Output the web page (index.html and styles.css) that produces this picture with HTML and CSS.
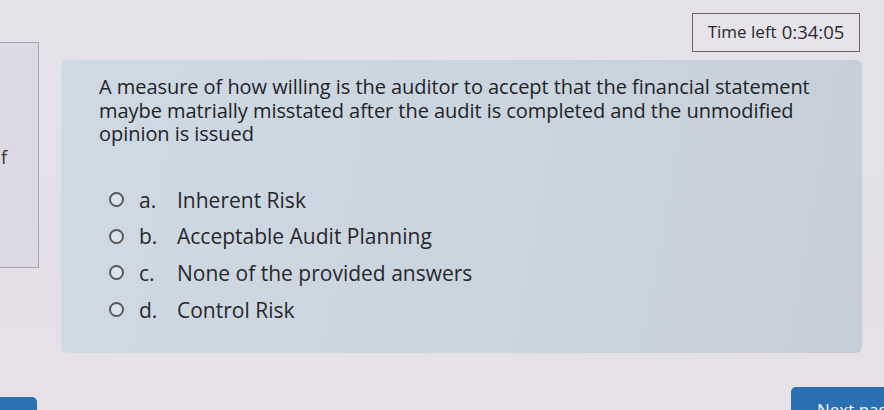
FILE: index.html
```html
<!DOCTYPE html>
<html>
<head>
<meta charset="utf-8">
<link rel="stylesheet" href="styles.css">
</head>
<body>
<div class="layout">
  <aside class="sidebar"><span class="side-f">f</span></aside>
  <main class="main">
    <div class="timer-row">
      <div class="timer">Time left <span class="clock">0:34:05</span></div>
    </div>
    <section class="card">
      <p class="question">A measure of how willing is the auditor to accept that the financial statement maybe matrially misstated after the audit is completed and the unmodified opinion is issued</p>
      <div class="answers">
        <label class="answer"><span class="radio"></span><span class="letter">a.</span><span class="atext">Inherent Risk</span></label>
        <label class="answer"><span class="radio"></span><span class="letter">b.</span><span class="atext">Acceptable Audit Planning</span></label>
        <label class="answer"><span class="radio"></span><span class="letter">c.</span><span class="atext">None of the provided answers</span></label>
        <label class="answer"><span class="radio"></span><span class="letter">d.</span><span class="atext">Control Risk</span></label>
      </div>
    </section>
  </main>
</div>
<footer class="footer">
  <div class="prev-btn"></div>
  <div class="next-btn">Next page</div>
</footer>
</body>
</html>
```
FILE: styles.css
```css
html, body {
  margin: 0;
  padding: 0;
}
body {
  width: 884px;
  height: 410px;
  overflow: hidden;
  background: linear-gradient(180deg, #e6e2ea 0%, #e4e0e8 60%, #e7e1e7 100%);
  font-family: "Open Sans", "Liberation Sans", sans-serif;
  color: #262628;
}
.layout {
  display: flex;
  align-items: flex-start;
  height: 384px;
}
.sidebar {
  width: 40px;
  height: 226px;
  margin-top: 42px;
  margin-left: -1px;
  border: 1px solid #aaa6ae;
  border-left: none;
  background: #ddd9e2;
  position: relative;
  box-sizing: border-box;
}
.side-f {
  position: absolute;
  left: 2px;
  top: 102px;
  font-size: 18px;
  color: #333;
}
.main {
  flex: 1;
  margin-left: 22px;
  margin-right: 22px;
  padding-top: 13px;
}
.timer-row {
  display: flex;
  justify-content: flex-end;
  padding-right: 2px;
}
.timer {
  width: 168px;
  height: 39px;
  box-sizing: border-box;
  border: 1.5px solid #6f6466;
  display: flex;
  align-items: center;
  justify-content: center;
  font-size: 17px;
  font-weight: 500;
  color: #2a2a2c;
  background: #e7e3ea;
  padding-bottom: 2px;
}
.clock {
  margin-left: 5px;
  font-size: 18.5px;
}
.card {
  margin-top: 8px;
  height: 293px;
  box-sizing: border-box;
  background: linear-gradient(100deg, #d0dae4 0%, #cad4df 60%, #c6cfd9 100%);
  border-radius: 6px;
  padding: 15px 40px 0 38px;
}
.question {
  margin: 0;
  font-size: 20px;
  line-height: 23.5px;
  font-weight: 500;
  color: #232326;
  letter-spacing: -0.05px;
}
.answers {
  margin-top: 40px;
  padding-left: 10px;
  display: flex;
  flex-direction: column;
  gap: 8.7px;
}
.answer {
  display: flex;
  align-items: center;
  height: 28px;
  font-size: 21px;
  font-weight: 500;
  color: #28282b;
}
.radio {
  width: 15px;
  height: 15px;
  box-sizing: border-box;
  border: 2px solid #5a5a5e;
  border-radius: 50%;
  background: #dde4ec;
  margin-right: 15px;
}
.letter {
  width: 38px;
}
.footer {
  display: flex;
  justify-content: space-between;
  align-items: flex-start;
}
.prev-btn {
  width: 37px;
  height: 20px;
  margin-top: 13px;
  background: #2b72b4;
  border-radius: 0 5px 0 0;
}
.next-btn {
  width: 93px;
  height: 30px;
  margin-top: 3px;
  background: #2a70b2;
  border-radius: 5px 0 0 0;
  color: #fff;
  font-size: 17px;
  padding: 11px 0 0 26px;
  box-sizing: border-box;
  white-space: nowrap;
  overflow: hidden;
}
```
